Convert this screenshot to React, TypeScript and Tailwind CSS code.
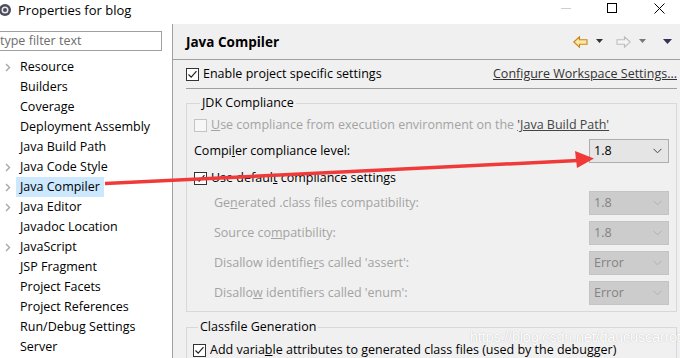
import React from "react";

const font = { fontFamily: '"Open Sans", "Noto Sans CJK SC", sans-serif' };

function Check({ checked, disabled }: { checked?: boolean; disabled?: boolean }) {
  return (
    <span
      className={`w-[13px] h-[13px] shrink-0 border flex items-center justify-center ${
        disabled ? "border-[#c4c4c4] bg-[#f7f7f7]" : "border-[#333] bg-white"
      }`}
    >
      {checked && (
        <svg width="11" height="11" viewBox="0 0 11 11">
          <path d="M1.5 5.5 L4.2 8.2 L9.5 2.2" fill="none" stroke="#222" strokeWidth="1.2" />
        </svg>
      )}
    </span>
  );
}

function Combo({ value, disabled }: { value: string; disabled?: boolean }) {
  return (
    <div
      className={`w-[80px] h-[24px] border flex items-center justify-between pl-[4px] pr-[6px] ${
        disabled ? "bg-[#cccccc] border-[#c4c4c4] text-[#838383]" : "bg-[#e5e5e5] border-[#adadad] text-black"
      }`}
    >
      <span className="pt-[1px]">{value}</span>
      <svg width="9" height="6" viewBox="0 0 9 6">
        <path d="M0.5 0.8 L4.5 4.8 L8.5 0.8" fill="none" stroke={disabled ? "#b0b0b0" : "#444"} strokeWidth="1" />
      </svg>
    </div>
  );
}

function Chevron() {
  return (
    <svg width="6" height="9" viewBox="0 0 6 9" className="absolute left-[5px] top-[6px]">
      <path d="M1 1 L4.5 4.5 L1 8" fill="none" stroke="#a6a6a6" strokeWidth="1.4" />
    </svg>
  );
}

const tree: { label: string; arrow?: boolean; selected?: boolean }[] = [
  { label: "Resource", arrow: true },
  { label: "Builders" },
  { label: "Coverage" },
  { label: "Deployment Assembly" },
  { label: "Java Build Path" },
  { label: "Java Code Style", arrow: true },
  { label: "Java Compiler", arrow: true, selected: true },
  { label: "Java Editor", arrow: true },
  { label: "Javadoc Location" },
  { label: "JavaScript", arrow: true },
  { label: "JSP Fragment" },
  { label: "Project Facets" },
  { label: "Project References" },
  { label: "Run/Debug Settings" },
  { label: "Server" },
];

function SubRow({ label, value, mt }: { label: React.ReactNode; value: string; mt: string }) {
  return (
    <div className={`flex items-center justify-between h-[24px] ${mt}`}>
      <span className="pl-[20px] pt-[1px] text-[#a3a3a3]">{label}</span>
      <Combo value={value} disabled />
    </div>
  );
}

export default function App() {
  return (
    <div className="w-[680px] h-[358px] overflow-hidden relative bg-white text-[12.5px] text-black leading-none" style={font}>
      {/* title bar */}
      <div className="h-[24px] flex items-center relative">
        <svg width="14" height="14" viewBox="0 0 14 14" className="ml-[-2px] mb-[4px]">
          <circle cx="7" cy="7" r="6" fill="#4b4b5a" />
          <circle cx="7" cy="7" r="3.5" fill="#e8e8ee" />
          <circle cx="7" cy="7" r="2" fill="#4b4b5a" />
        </svg>
        <span className="ml-[6px] text-[13px] mb-[4px]">Properties for blog</span>
        <div className="ml-auto flex items-center h-full mb-[8px]">
          <span className="w-[10px] h-px bg-[#cfcfcf] mr-[36px]" />
          <span className="w-[10px] h-[10px] border border-black mr-[37px]" />
          <svg width="11" height="11" viewBox="0 0 11 11" className="mr-[15px]">
            <path d="M0.5 0.5 L10.5 10.5 M10.5 0.5 L0.5 10.5" stroke="#000" strokeWidth="1" />
          </svg>
        </div>
      </div>

      <div className="flex h-[334px]">
        {/* left tree */}
        <div className="w-[173px] shrink-0 border-r border-[#a0a0a0] bg-white">
          <div className="ml-[-3px] mt-[7px] w-[165px] h-[20px] border border-[#a0a0a0] flex items-center pl-[2px] pt-[1px] text-[#6d6d6d]">
            type filter text
          </div>
          <div className="mt-[6px]">
            {tree.map((t) => (
              <div key={t.label} className="relative h-[20px] flex items-center">
                {t.arrow && <Chevron />}
                <span className={`ml-[16px] h-[20px] flex items-center px-[4px] ${t.selected ? "bg-[#cce8ff]" : ""}`}>
                  {t.label}
                </span>
              </div>
            ))}
          </div>
        </div>

        {/* right panel */}
        <div className="flex-1 bg-[#f0f0f0]">
          <div className="h-[36px] border-b border-[#a0a0a0] flex items-center pl-[13px] pr-[8px]">
            <span className="font-bold text-[13.5px] pt-[3px]">Java Compiler</span>
            <div className="ml-auto flex items-center gap-[8px]">
              <svg width="15" height="12" viewBox="0 0 15 12">
                <path d="M0.8 6 L6.5 0.8 L6.5 3.8 L14 3.8 L14 8.2 L6.5 8.2 L6.5 11.2 Z" fill="#fde7a6" stroke="#c8861c" strokeWidth="1.1" />
              </svg>
              <svg width="8" height="5" viewBox="0 0 8 5"><path d="M0 0 H7 L3.5 4 Z" fill="#333" /></svg>
              <svg width="15" height="12" viewBox="0 0 15 12" className="ml-[4px]">
                <path d="M14.2 6 L8.5 0.8 L8.5 3.8 L1 3.8 L1 8.2 L8.5 8.2 L8.5 11.2 Z" fill="#f4f4f4" stroke="#bdbdbd" strokeWidth="1.1" />
              </svg>
              <svg width="8" height="5" viewBox="0 0 8 5"><path d="M0 0 H7 L3.5 4 Z" fill="#777" /></svg>
              <svg width="9" height="6" viewBox="0 0 9 6" className="ml-[8px]"><path d="M0 0 H9 L4.5 5 Z" fill="#3a2d5c" /></svg>
            </div>
          </div>

          <div className="pl-[13px] pr-[3px]">
            <div className="mt-[4px] h-[20px] flex items-center">
              <Check checked />
              <span className="ml-[4px] pt-[1px]">
                Enable pro<span className="underline">j</span>ect specific settings
              </span>
              <span className="ml-auto pt-[1px] underline text-[#333]">Configure Workspace Settings...</span>
            </div>
            <div className="mt-[4px] border-t border-[#a0a0a0]" />

            <fieldset className="mt-[5px] w-[491px] border border-[#d8d8d8] px-[7px] pb-[6px]">
              <legend className="ml-[6px] px-[2px] leading-[18px]">JDK Compliance</legend>
              <div className="mt-[3px] h-[20px] flex items-center text-[#a3a3a3]">
                <Check disabled />
                <span className="ml-[4px] pt-[1px]">
                  <span className="underline">U</span>se compliance from execution environment on the{" "}
                  <span className="underline text-[#444]">'Java Build Path'</span>
                </span>
              </div>
              <div className="mt-[4px] h-[24px] flex items-center justify-between">
                <span className="pt-[1px]">
                  Compi<span className="underline">l</span>er compliance level:
                </span>
                <Combo value="1.8" />
              </div>
              <div className="mt-[5px] h-[20px] flex items-center">
                <Check checked />
                <span className="ml-[4px] pt-[1px]">
                  Use defaul<span className="underline">t</span> compliance settings
                </span>
              </div>
              <SubRow
                mt="mt-[3px]"
                value="1.8"
                label={<>Ge<span className="underline">n</span>erated .class files compatibility:</>}
              />
              <SubRow
                mt="mt-[6px]"
                value="1.8"
                label={<>Source co<span className="underline">m</span>patibility:</>}
              />
              <SubRow
                mt="mt-[6px]"
                value="Error"
                label={<>Disallow identifie<span className="underline">r</span>s called 'assert':</>}
              />
              <SubRow
                mt="mt-[6px]"
                value="Error"
                label={<>Disallo<span className="underline">w</span> identifiers called 'enum':</>}
              />
            </fieldset>

            <fieldset className="mt-[6px] w-[491px] border border-[#d8d8d8] px-[6px] pb-[6px]">
              <legend className="ml-[5px] px-[2px] leading-[18px]">Classfile Generation</legend>
              <div className="mt-[4px] h-[20px] flex items-center">
                <Check checked />
                <span className="ml-[4px] pt-[1px]">
                  Add varia<span className="underline">b</span>le attributes to generated class files (used by the debugger)
                </span>
              </div>
            </fieldset>
          </div>
        </div>
      </div>

      {/* watermark */}
      <div
        className="absolute left-[470px] top-[330px] text-[14.5px] text-white whitespace-nowrap tracking-[-0.2px]"
        style={{ fontFamily: '"Liberation Sans", Arial, sans-serif', textShadow: "0 0 1px #b0b0b0" }}
      >
        https://blog.csdn.net/daucuscarrot
      </div>

      {/* red annotation arrow */}
      <svg className="absolute inset-0 pointer-events-none" width="680" height="358">
        <path d="M105 183.5 L578 160.5" stroke="#f03a3a" strokeWidth="3.5" />
        <polygon points="575,151 594,158.5 577,168" fill="#f03a3a" />
      </svg>
    </div>
  );
}
